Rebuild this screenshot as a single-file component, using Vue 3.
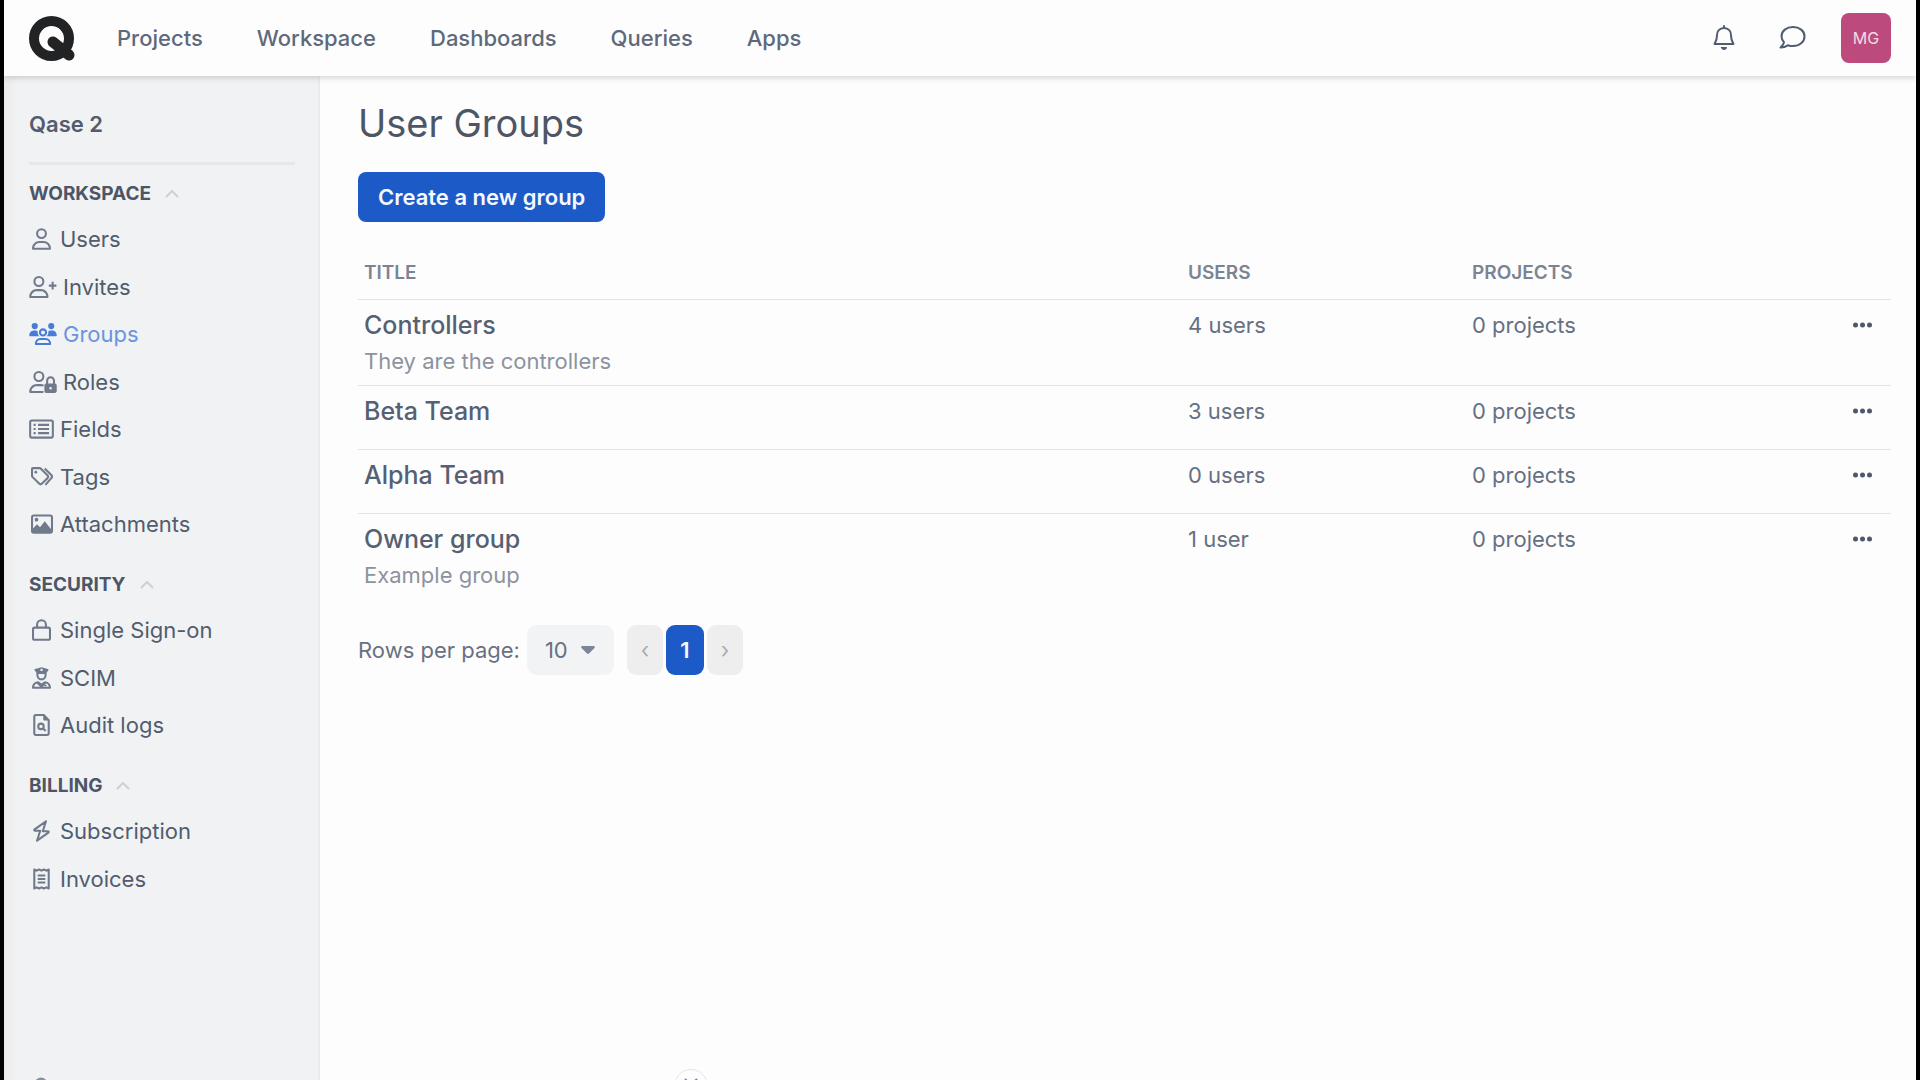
<script setup>
import { ref } from 'vue'

const nav = ['Projects', 'Workspace', 'Dashboards', 'Queries', 'Apps']

const userPath =
  'M304 128a80 80 0 1 0-160 0 80 80 0 1 0 160 0zM96 128a128 128 0 1 1 256 0A128 128 0 1 1 96 128zM49.3 464H398.7c-8.9-63.3-63.3-112-129-112H178.3c-65.7 0-120.1 48.7-129 112zM0 482.3C0 383.8 79.8 304 178.3 304h91.4C368.2 304 448 383.8 448 482.3c0 16.4-13.3 29.7-29.7 29.7H29.7C13.3 512 0 498.7 0 482.3z'

// w: viewBox width, px: drawn width, fill / line: path data
const icons = {
  user: { w: 448, px: 19, fill: userPath },
  invite: { w: 640, px: 28, fill: userPath, line: 'M544 134v180M456 224h176' },
  groups: {
    w: 640,
    px: 28,
    fill: 'M128 0a72 72 0 1 1 0 144 72 72 0 1 1 0-144zM512 0a72 72 0 1 1 0 144 72 72 0 1 1 0-144zM0 290c0-64 42-114 100-114h46c22 0 38 6 50 14-6 46 8 88 38 118H18c-10 0-18-8-18-18zM640 290c0-64-42-114-100-114h-46c-22 0-38 6-50 14 6 46-8 88-38 118h216c10 0 18-8 18-18z',
    line: 'M320 148a72 72 0 1 1 0 144 72 72 0 1 1 0-144zM154 488c0-66 44-116 104-116h124c60 0 104 50 104 116z',
  },
  roles: {
    w: 640,
    px: 28,
    fill: 'M304 128a80 80 0 1 0-160 0 80 80 0 1 0 160 0zM96 128a128 128 0 1 1 256 0A128 128 0 1 1 96 128zM49.3 464H330v48H29.7C13.3 512 0 498.7 0 482.3 0 383.8 79.8 304 178.3 304h91.4c26 0 50 5 72 15l-16 42c-17-6-36-9-56-9h-91.4c-65.7 0-120.1 48.7-129 112zM392 288v-60c0-60 46-104 104-104s104 44 104 104v60c24 4 40 22 40 44v136c0 26-18 44-44 44H396c-26 0-44-18-44-44V332c0-22 16-40 40-44zM440 288h112v-60c0-34-24-58-56-58s-56 24-56 58zM496 370a30 30 0 1 0 0 60 30 30 0 1 0 0-60z',
  },
  fields: {
    w: 576,
    px: 25,
    fill: 'M104 136h48v48h-48zM104 232h48v48h-48zM104 328h48v48h-48z',
    line: 'M64 56h448c24 0 40 16 40 40v320c0 24-16 40-40 40H64c-24 0-40-16-40-40V96c0-24 16-40 40-40zM208 160h256M208 256h256M208 352h256',
  },
  tags: {
    w: 512,
    px: 22,
    fill: 'M112 112a32 32 0 1 1 0 64 32 32 0 1 1 0-64z',
    line: 'M24 64v160c0 14 5 26 14 35l150 150c19 19 49 19 68 0l126-126c19-19 19-49 0-68L232 64c-9-9-21-14-34-14H42c-10 0-18 6-18 14zM320 56l152 154c20 20 20 52 0 72L336 440',
  },
  image: {
    w: 512,
    px: 22,
    fill: 'M128 112a44 44 0 1 1 0 88 44 44 0 1 1 0-88zM30 380l110-120 70 74 110-140 162 200v62H30z',
    line: 'M64 56h384c24 0 40 16 40 40v320c0 24-16 40-40 40H64c-24 0-40-16-40-40V96c0-24 16-40 40-40z',
  },
  lock: {
    w: 448,
    px: 19,
    line: 'M120 200v-72c0-58 46-104 104-104s104 46 104 104v72M64 200h320c24 0 40 16 40 40v208c0 24-16 40-40 40H64c-24 0-40-16-40-40V240c0-24 16-40 40-40z',
  },
  officer: {
    w: 448,
    px: 19,
    fill: 'M224 0l150 42c14 5 20 20 12 34l-42 58v26H104v-26L62 76c-8-14-2-29 12-34zM224 34l-30 22 10 32h40l10-32zM0 486c0-86 62-146 150-152l74 52 74-52c88 6 150 66 150 152 0 16-10 26-26 26H26c-16 0-26-10-26-26zM112 384c-30 8-52 34-60 76h140zM336 384c30 8 52 34 60 76H256zM288 420v28h56v-28z',
    line: 'M128 150v40c0 56 42 98 96 98s96-42 96-98v-40',
  },
  audit: {
    w: 384,
    px: 17,
    fill: 'M232 0l152 152H264c-20 0-32-12-32-32z',
    line: 'M64 24h180l116 122v302c0 24-16 40-40 40H64c-24 0-40-16-40-40V64c0-24 16-40 40-40zM180 224a64 64 0 1 1 0 128 64 64 0 1 1 0-128zM226 334l62 62',
  },
  bolt: {
    w: 384,
    px: 17,
    line: 'M296 30L32 220c-14 10-8 30 10 30h120L88 482l264-190c14-10 8-30-10-30H222z',
  },
  receipt: {
    w: 384,
    px: 17,
    line: 'M24 34l56 28 56-28 56 28 56-28 56 28 56-28v444l-56-28-56 28-56-28-56 28-56-28-56 28zM104 176h176M104 256h176M104 336h176',
  },
}

const sections = [
  {
    title: 'Workspace',
    items: [
      { label: 'Users', icon: 'user' },
      { label: 'Invites', icon: 'invite' },
      { label: 'Groups', icon: 'groups', active: true },
      { label: 'Roles', icon: 'roles' },
      { label: 'Fields', icon: 'fields' },
      { label: 'Tags', icon: 'tags' },
      { label: 'Attachments', icon: 'image' },
    ],
  },
  {
    title: 'Security',
    items: [
      { label: 'Single Sign-on', icon: 'lock' },
      { label: 'SCIM', icon: 'officer' },
      { label: 'Audit logs', icon: 'audit' },
    ],
  },
  {
    title: 'Billing',
    items: [
      { label: 'Subscription', icon: 'bolt' },
      { label: 'Invoices', icon: 'receipt' },
    ],
  },
]

const groups = [
  { title: 'Controllers', note: 'They are the controllers', users: '4 users', projects: '0 projects' },
  { title: 'Beta Team', users: '3 users', projects: '0 projects' },
  { title: 'Alpha Team', users: '0 users', projects: '0 projects' },
  { title: 'Owner group', note: 'Example group', users: '1 user', projects: '0 projects' },
]

const perPage = ref('10')
</script>

<template>
  <div class="frame">
    <header class="topbar">
      <a href="#" class="logo" aria-label="Home">
        <svg viewBox="0 0 46 46" width="46" height="46" fill="none" stroke="#222325" stroke-linecap="round">
          <circle cx="22.5" cy="23.5" r="17.5" stroke-width="10" />
          <path d="M24 27L40 40" stroke-width="11" />
        </svg>
      </a>
      <nav class="nav">
        <a v-for="n in nav" :key="n" href="#">{{ n }}</a>
      </nav>
      <div class="actions">
        <button type="button" class="plain" aria-label="Notifications">
          <svg viewBox="0 0 24 26" width="24" height="26" fill="none" stroke="currentColor" stroke-width="2" stroke-linejoin="round" stroke-linecap="round">
            <path d="M12 3C7.500 3 5 6.500 5 10.500c0 4.500-1 6-2.500 8.500h19C20 16.500 19 15 19 10.500 19 6.500 16.500 3 12 3zM12 1v2" />
            <path d="M9.500 22.500h5a2.500 2 0 0 1-5 0z" fill="currentColor" stroke-width="1" />
          </svg>
        </button>
        <button type="button" class="plain" aria-label="Messages">
          <svg viewBox="0 0 28 26" width="28" height="26" fill="none" stroke="currentColor" stroke-width="2" stroke-linejoin="round">
            <path d="M15 2C8.500 2 3.500 6 3.500 11.200c0 2.300.9 4.300 2.500 5.900-.3 2.200-1.700 3.900-3.500 5.400 3 0 5.300-.7 7.300-2.300 1.600.6 3.300.9 5.200.9 6.500 0 11.500-4.200 11.500-9.700S21.500 2 15 2z" />
          </svg>
        </button>
        <button type="button" class="avatar">MG</button>
      </div>
    </header>

    <div class="body">
      <aside class="sidebar">
        <div class="company">Qase 2</div>
        <section v-for="s in sections" :key="s.title" class="section">
          <h2>
            {{ s.title }}
            <svg viewBox="0 0 14 8" width="14" height="8" fill="none" stroke="currentColor" stroke-width="2"><path d="M1 7l6-6 6 6" /></svg>
          </h2>
          <ul>
            <li v-for="i in s.items" :key="i.label">
              <a href="#" :class="{ active: i.active }">
                <span class="slot">
                  <svg :viewBox="`0 0 ${icons[i.icon].w} 512`" :width="icons[i.icon].px" height="22">
                    <path v-if="icons[i.icon].fill" :d="icons[i.icon].fill" fill="currentColor" fill-rule="evenodd" />
                    <path v-if="icons[i.icon].line" :d="icons[i.icon].line" fill="none" stroke="currentColor" stroke-width="48" stroke-linejoin="round" />
                  </svg>
                </span>
                {{ i.label }}
              </a>
            </li>
          </ul>
        </section>
      </aside>

      <main class="content">
        <h1>User Groups</h1>
        <button type="button" class="create">Create a new group</button>

        <table>
          <thead>
            <tr>
              <th>Title</th>
              <th class="col">Users</th>
              <th class="col">Projects</th>
              <th class="menu" aria-label="Actions"></th>
            </tr>
          </thead>
          <tbody>
            <tr v-for="g in groups" :key="g.title">
              <td>
                <a href="#" class="name">{{ g.title }}</a>
                <p v-if="g.note" class="note">{{ g.note }}</p>
              </td>
              <td>{{ g.users }}</td>
              <td>{{ g.projects }}</td>
              <td class="menu">
                <button type="button" class="plain" :aria-label="`Actions for ${g.title}`">
                  <svg viewBox="0 0 20 6" width="20" height="6" fill="currentColor">
                    <circle cx="3.500" cy="3" r="2.500" /><circle cx="10.500" cy="3" r="2.500" /><circle cx="17.500" cy="3" r="2.500" />
                  </svg>
                </button>
              </td>
            </tr>
          </tbody>
        </table>

        <div class="pager">
          <label for="rows">Rows per page:</label>
          <span class="select">
            <select id="rows" v-model="perPage">
              <option>10</option>
              <option>20</option>
              <option>50</option>
            </select>
            <svg viewBox="0 0 14 8" width="14" height="8" fill="currentColor"><path d="M1.500 0h11c1.200 0 1.800 1.300 1 2L8 7.500c-.6.600-1.400.600-2 0L.5 2C-.3 1.300.3 0 1.500 0z" /></svg>
          </span>
          <div class="pages">
            <button type="button">‹</button>
            <button type="button" class="current">1</button>
            <button type="button">›</button>
          </div>
        </div>
      </main>
    </div>

    <a href="#" class="help" aria-label="Help">
      <svg viewBox="0 0 20 20" width="20" height="20" fill="none" stroke="currentColor" stroke-width="3"><circle cx="10" cy="10" r="5" /></svg>
    </a>
    <button type="button" class="collapse" aria-label="Show more">
      <svg viewBox="0 0 14 8" width="14" height="8" fill="none" stroke="currentColor" stroke-width="2"><path d="M1 1l6 6 6-6" /></svg>
    </button>
  </div>
</template>

<style>
body {
  margin: 0;
  background: #000;
}
</style>

<style scoped>
.frame {
  position: relative;
  display: flex;
  flex-direction: column;
  box-sizing: border-box;
  height: 100vh;
  overflow: hidden;
  border: 0 solid #000;
  border-width: 0 4px;
  background: #fdfdfd;
  color: #525c6e;
  font: 22px/32px Inter, 'Liberation Sans', sans-serif;
}
a {
  color: inherit;
  text-decoration: none;
}
button,
select {
  margin: 0;
  padding: 0;
  border: 0;
  font: inherit;
  color: inherit;
  cursor: pointer;
}
svg {
  display: block;
  flex: none;
}
.plain {
  display: flex;
  background: none;
}

.topbar {
  position: relative;
  z-index: 1;
  display: flex;
  align-items: center;
  flex: none;
  height: 76px;
  padding: 0 25px;
  background: #fdfdfd;
  box-shadow: 0 2px 6px rgba(0, 0, 0, 0.16);
}
.nav {
  display: flex;
  gap: 54px;
  margin-left: 42px;
  font-weight: 500;
  color: #5f697c;
}
.actions {
  display: flex;
  align-items: center;
  gap: 42px;
  margin-left: auto;
  color: #505c72;
}
.avatar {
  width: 50px;
  height: 50px;
  margin-left: -7px;
  border-radius: 8px;
  background: #bd4a7d;
  color: #f3dbe6;
  font-size: 16px;
}

.body {
  display: flex;
  flex: 1;
}
.sidebar {
  box-sizing: border-box;
  width: 316px;
  flex: none;
  padding: 0 23px 0 25px;
  border-right: 2px solid #ebebec;
  background: linear-gradient(90deg, #ebebeb, #f0f2f4 14px);
}
.company {
  padding: 32px 0 22px;
  border-bottom: 3px solid #e5e7ea;
  margin-bottom: 17px;
  font-weight: 600;
}
.section {
  margin-bottom: 25px;
}
.section h2 {
  display: flex;
  align-items: center;
  gap: 14px;
  margin: 0 0 9px;
  font-size: 19px;
  line-height: 24px;
  font-weight: 700;
  text-transform: uppercase;
  color: #4c5667;
}
.section h2 svg {
  color: #cdd0d5;
}
.section ul {
  display: grid;
  grid-auto-rows: 48px 47px;
  margin: 0;
  padding: 0;
  list-style: none;
}
.section li a {
  display: flex;
  align-items: center;
  gap: 6px;
  height: 100%;
}
.section li a.active {
  color: #6b94de;
}
.slot {
  display: flex;
  justify-content: center;
  min-width: 25px;
  color: #717a8b;
}
.active .slot {
  color: #477cd8;
}

.content {
  flex: 1;
  padding: 23px 25px 0 38px;
}
h1 {
  margin: 0 0 25px;
  font-size: 38px;
  line-height: 48px;
  font-weight: 400;
  color: #4d5666;
}
.create {
  display: block;
  height: 50px;
  padding: 0 20px;
  border-radius: 8px;
  background: #1c5ac8;
  color: #f5f8fd;
  font-weight: 600;
}
table {
  width: 100%;
  margin-top: 24px;
  border-collapse: collapse;
  table-layout: fixed;
}
th {
  height: 53px;
  padding: 0 6px;
  text-align: left;
  font-size: 19px;
  font-weight: 600;
  text-transform: uppercase;
  color: #7c8493;
}
.col {
  width: 272px;
}
.menu {
  width: 129px;
}
tr {
  border-bottom: 1px solid #e3e4e6;
}
tbody tr:last-child {
  border-bottom: 0;
}
td {
  box-sizing: border-box;
  height: 64px;
  padding: 9px 6px 8px;
  vertical-align: top;
  color: #667083;
}
.name {
  display: block;
  font-size: 25px;
  font-weight: 500;
  color: #566073;
}
.note {
  margin: 4px 0 0;
  color: #8d939e;
}
.menu .plain {
  margin-left: auto;
  padding: 13px;
  color: #4f586b;
}
.pager {
  display: flex;
  align-items: center;
  margin-top: 26px;
  color: #687183;
}
.select {
  position: relative;
  margin-left: 7px;
}
.select select {
  display: block;
  width: 87px;
  height: 50px;
  padding-left: 18px;
  border-radius: 10px;
  background: #f1f3f5;
  appearance: none;
}
.select svg {
  position: absolute;
  top: 21px;
  right: 19px;
  pointer-events: none;
  color: #7d8698;
}
.pages {
  display: flex;
  gap: 3px;
  margin-left: 13px;
}
.pages button {
  width: 36px;
  height: 50px;
  border-radius: 9px;
  background: #eeeeef;
  color: #a9adb4;
}
.pages .current {
  width: 38px;
  background: #1c5ac8;
  color: #f5f8fd;
  font-weight: 600;
}

.help {
  position: absolute;
  left: 27px;
  bottom: -14px;
  color: #8a919e;
}
.collapse {
  position: absolute;
  left: 670px;
  bottom: -23px;
  display: flex;
  justify-content: center;
  box-sizing: border-box;
  width: 34px;
  height: 34px;
  padding-top: 8px;
  border: 1px solid #e4e5e7;
  border-radius: 50%;
  background: #fdfdfd;
  color: #7b8290;
}
</style>
